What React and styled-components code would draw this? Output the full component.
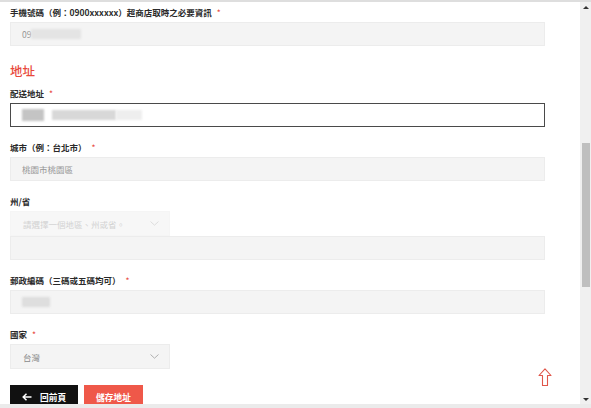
import React from 'react';
import styled, { createGlobalStyle } from 'styled-components';

const GlobalStyle = createGlobalStyle`
  html, body {
    margin: 0;
    padding: 0;
    background: #fff;
  }
  body {
    font-family: "Noto Sans CJK TC", "Noto Sans", "Liberation Sans", sans-serif;
    overflow: hidden;
  }
`;

const colors = {
  red: '#e8483b',
  label: '#2a2a2a',
  fieldBg: '#f4f4f4',
  fieldBorder: '#ececec',
  placeholder: '#969696',
};

// Ventana con barra de desplazamiento
const Frame = styled.div`
  width: 591px;
  height: 408px;
  box-sizing: border-box;
  border-top: 2px solid #dedede;
  border-bottom: 4px solid #ebebeb;
  display: flex;
  overflow: hidden;
`;

const Content = styled.div`
  flex: 1;
  position: relative;
  padding: 5px 0 0 10px;
  box-sizing: border-box;
  overflow: hidden;
`;

const Scrollbar = styled.div`
  width: 11px;
  background: #f0f0f0;
  display: flex;
  flex-direction: column;
  align-items: center;
  padding-top: 4px;
  box-sizing: border-box;
`;

const ScrollArrow = styled.div`
  width: 0;
  height: 0;
  border-left: 3px solid transparent;
  border-right: 3px solid transparent;
  ${({ $down }) =>
    $down
      ? 'border-top: 3px solid #333; margin-top: auto; margin-bottom: 3px;'
      : 'border-bottom: 3px solid #333;'}
`;

const ScrollThumb = styled.div`
  width: 8px;
  height: 144px;
  margin-top: 134px;
  background: #bfbfbf;
`;

// Formulario
const Group = styled.div`
  display: flex;
  flex-direction: column;
  gap: 5px;
  margin-bottom: 15px;
`;

const Label = styled.div`
  font-size: 8.5px;
  line-height: 10px;
  height: 10px;
  font-weight: 700;
  color: ${colors.label};
  white-space: nowrap;
`;

const Required = styled.span`
  color: ${colors.red};
  margin-left: 5px;
  font-weight: 400;
`;

const SectionTitle = styled.h3`
  margin: 18px 0 10px;
  font-size: 12.5px;
  line-height: 14px;
  font-weight: 500;
  color: ${colors.red};
`;

const Field = styled.div`
  width: 535px;
  height: 24px;
  box-sizing: border-box;
  background: ${({ $active }) => ($active ? '#fff' : colors.fieldBg)};
  border: 1px solid ${({ $active }) => ($active ? '#4a4a4a' : colors.fieldBorder)};
  display: flex;
  align-items: center;
  padding-left: 11px;
  font-size: 8.5px;
  color: ${colors.placeholder};
  overflow: hidden;
`;

const Select = styled.div`
  width: 160px;
  height: 25px;
  box-sizing: border-box;
  background: ${({ $faint }) => ($faint ? '#f7f7f7' : colors.fieldBg)};
  border: 1px solid ${({ $faint }) => ($faint ? '#f5f5f5' : colors.fieldBorder)};
  display: flex;
  align-items: center;
  justify-content: space-between;
  padding: 0 10px 0 12px;
  font-size: 8.5px;
  color: ${({ $faint }) => ($faint ? '#d2d2d2' : '#8a8a8a')};
`;

const Redacted = styled.span`
  display: inline-block;
  width: ${({ $w }) => $w}px;
  height: ${({ $h }) => $h || 10}px;
  margin-left: ${({ $gap }) => $gap || 0}px;
  background: ${({ $tone }) => $tone};
  filter: blur(1.2px);
`;

const Actions = styled.div`
  display: flex;
  gap: 6px;
  margin-top: 16px;
`;

const Button = styled.button`
  height: 24px;
  border: none;
  padding: 0 12px;
  background: ${({ $dark }) => ($dark ? '#111' : '#ef5849')};
  color: #fff;
  font-family: inherit;
  font-size: 8.7px;
  font-weight: 700;
  display: flex;
  align-items: center;
  gap: 8px;
  cursor: pointer;
`;

const ToTop = styled.button`
  position: absolute;
  right: 28px;
  bottom: 14px;
  background: none;
  border: none;
  padding: 0;
  cursor: pointer;
`;

const Chevron = ({ color }) => (
  <svg width="9" height="5" viewBox="0 0 9 5">
    <path d="M0.5 0.5 L4.5 4.2 L8.5 0.5" fill="none" stroke={color} strokeWidth="0.9" />
  </svg>
);

const App = () => (
  <>
    <GlobalStyle />
    <Frame>
      <Content>
        <Group>
          <Label>
            手機號碼（例：0900xxxxxx）超商店取時之必要資訊<Required>*</Required>
          </Label>
          <Field>
            09
            <Redacted $w={50} $tone="#e4e4e4" />
          </Field>
        </Group>

        <SectionTitle>地址</SectionTitle>

        <Group>
          <Label>
            配送地址<Required>*</Required>
          </Label>
          <Field $active>
            <Redacted $w={22} $h={12} $tone="#c4c4c4" />
            <Redacted $w={64} $gap={8} $tone="#d8d8d8" />
            <Redacted $w={26} $tone="#eeeeee" />
          </Field>
        </Group>

        <Group>
          <Label>
            城市（例：台北市）<Required>*</Required>
          </Label>
          <Field>桃園市桃園區</Field>
        </Group>

        <Group>
          <Label>州/省</Label>
          <div>
            <Select $faint>
              請選擇一個地區、州或省。
              <Chevron color="#dadada" />
            </Select>
            <Field />
          </div>
        </Group>

        <Group>
          <Label>
            郵政編碼（三碼或五碼均可）<Required>*</Required>
          </Label>
          <Field>
            <Redacted $w={28} $tone="#dedede" />
          </Field>
        </Group>

        <Group>
          <Label>
            國家<Required>*</Required>
          </Label>
          <Select>
            台灣
            <Chevron color="#a8a8a8" />
          </Select>
        </Group>

        <Actions>
          <Button $dark>
            <svg width="10" height="8" viewBox="0 0 10 8">
              <path d="M9.5 4 H1.5 M4.5 0.8 L1.2 4 L4.5 7.2" fill="none" stroke="#fff" strokeWidth="1.5" />
            </svg>
            回前頁
          </Button>
          <Button>儲存地址</Button>
        </Actions>

        <ToTop aria-label="回到頂端">
          <svg width="14" height="19" viewBox="0 0 14 19">
            <path
              d="M7 0.8 L13 7.5 H9.5 V17.5 H4.5 V7.5 H1 Z"
              fill="#fff"
              stroke="#e0564a"
              strokeWidth="1.1"
              strokeLinejoin="round"
            />
          </svg>
        </ToTop>
      </Content>
      <Scrollbar>
        <ScrollArrow />
        <ScrollThumb />
        <ScrollArrow $down />
      </Scrollbar>
    </Frame>
  </>
);

export default App;
